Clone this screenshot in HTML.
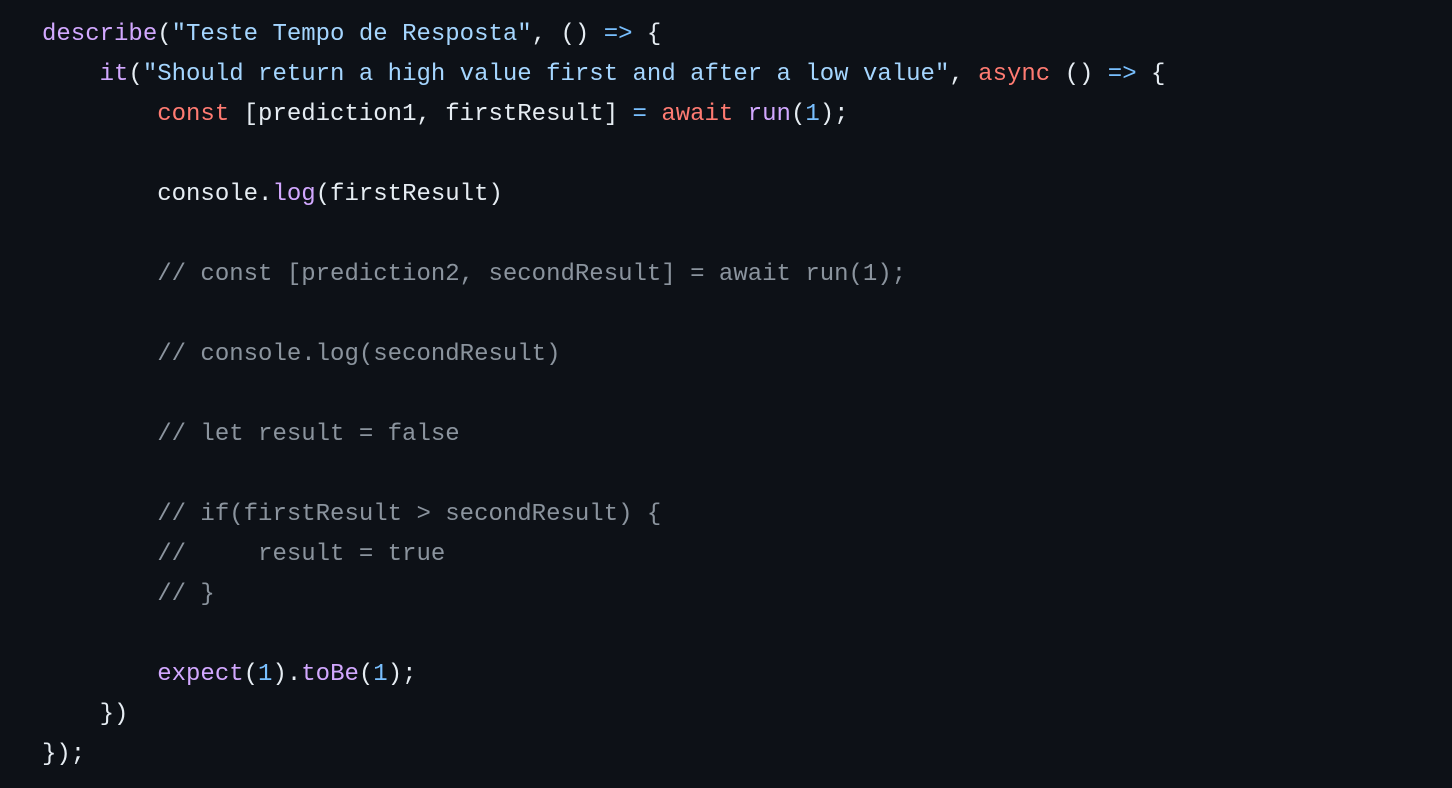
<!DOCTYPE html>
<html><head><meta charset="utf-8"><style>
html,body{margin:0;padding:0;background:#0d1117;width:1452px;height:788px;overflow:hidden}
pre{margin:0;position:absolute;left:42px;top:15px;font-family:"Liberation Mono",monospace;font-size:24px;line-height:40px;color:#e6edf3;white-space:pre}
.f{color:#d2a8ff}.s{color:#a5d6ff}.k{color:#ff7b72}.o{color:#79c0ff}.n{color:#79c0ff}.c{color:#8b949e}
</style></head><body>
<pre><span class="f">describe</span>(<span class="s">"Teste Tempo de Resposta"</span>, () <span class="o">=&gt;</span> {
    <span class="f">it</span>(<span class="s">"Should return a high value first and after a low value"</span>, <span class="k">async</span> () <span class="o">=&gt;</span> {
        <span class="k">const</span> [prediction1, firstResult] <span class="o">=</span> <span class="k">await</span> <span class="f">run</span>(<span class="n">1</span>);

        console.<span class="f">log</span>(firstResult)

        <span class="c">// const [prediction2, secondResult] = await run(1);</span>

        <span class="c">// console.log(secondResult)</span>

        <span class="c">// let result = false</span>

        <span class="c">// if(firstResult &gt; secondResult) {</span>
        <span class="c">//     result = true</span>
        <span class="c">// }</span>

        <span class="f">expect</span>(<span class="n">1</span>).<span class="f">toBe</span>(<span class="n">1</span>);
    })
});</pre>
</body></html>
